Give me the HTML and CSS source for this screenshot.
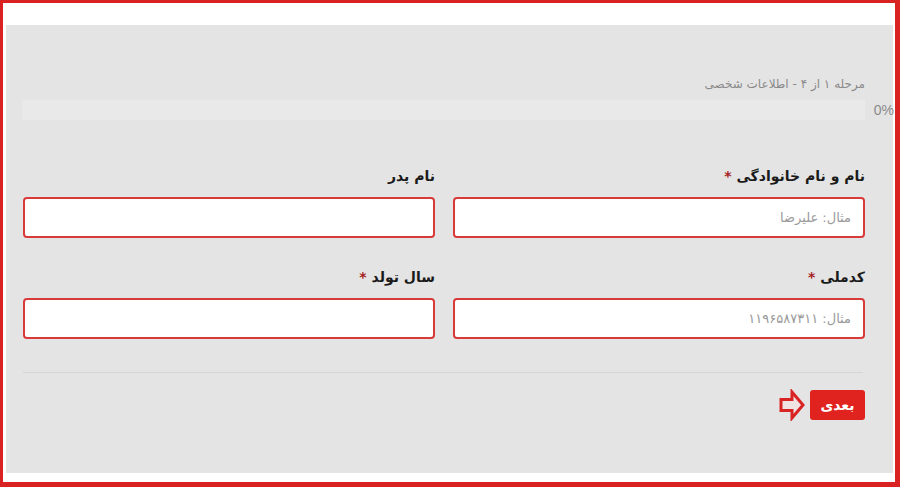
FILE: index.html
```html
<!DOCTYPE html>
<html lang="fa" dir="rtl">
<head>
<meta charset="utf-8">
<link rel="stylesheet" href="styles.css">
</head>
<body>
<div class="frame">
  <div class="panel">
    <div class="step">مرحله ۱ از ۴ - اطلاعات شخصی</div>
    <div class="progress">
      <div class="bar"></div>
      <span class="pct" dir="ltr">0%</span>
    </div>
    <div class="grid">
      <div class="field">
        <label>نام و نام خانوادگی <span class="req">*</span></label>
        <input type="text" placeholder="مثال: علیرضا">
      </div>
      <div class="field">
        <label>نام پدر</label>
        <input type="text">
      </div>
      <div class="field">
        <label>کدملی <span class="req">*</span></label>
        <input type="text" placeholder="مثال: ۱۱۹۶۵۸۷۳۱۱">
      </div>
      <div class="field">
        <label>سال تولد <span class="req">*</span></label>
        <input type="text">
      </div>
    </div>
    <div class="divider"></div>
    <div class="actions">
      <button class="next">بعدی</button>
      <svg class="arrow" width="26" height="32" viewBox="0 0 26 32">
        <path d="M2 10.5 H13 V3 L24 16 L13 29 V21.5 H2 Z" fill="#efe3e3" stroke="#d92424" stroke-width="3" stroke-linejoin="miter"/>
      </svg>
    </div>
  </div>
</div>
</body>
</html>
```

FILE: styles.css
```css
* { box-sizing: border-box; }
html, body { margin: 0; padding: 0; background: #fff; }
body { font-family: "DejaVu Sans", "Noto Sans", sans-serif; }

.frame {
  width: 900px;
  height: 487px;
  border-style: solid;
  border-color: #d92323;
  border-width: 3px 5px 5px 3px;
  padding: 22px 2px 9px 3px;
  background: #fff;
}

.panel {
  height: 100%;
  background: #e4e4e4;
  padding: 49px 28px 0 17px;
}

.step {
  font-size: 12px;
  line-height: 20px;
  color: #8a8a8a;
}

.progress {
  position: relative;
  margin-top: 6px;
  margin-left: -1px;
  height: 20px;
}
.bar {
  height: 20px;
  background: #e9e9e9;
}
.pct {
  position: absolute;
  right: -29px;
  top: 1px;
  font-family: "Liberation Sans", sans-serif;
  font-size: 14px;
  line-height: 18px;
  color: #8a8a8a;
}

.grid {
  display: grid;
  grid-template-columns: 1fr 1fr;
  column-gap: 18px;
  row-gap: 29px;
  margin-top: 46px;
}
.field label {
  display: block;
  font-weight: bold;
  font-size: 14px;
  line-height: 20px;
  color: #1a1a1a;
  margin-bottom: 11px;
}
.req { color: #a51d1d; }
.field input {
  display: block;
  width: 100%;
  height: 41px;
  border: 2px solid #d83a3a;
  border-radius: 4px;
  background: #fff;
  padding: 0 12px;
  font-family: "DejaVu Sans", sans-serif;
  font-size: 13px;
  color: #333;
  outline: none;
}
.field input::placeholder { color: #9a9a9a; }

.divider {
  height: 1px;
  background: #d6d6d6;
  margin: 33px 2px 0 0;
}

.actions {
  display: flex;
  align-items: center;
  gap: 5px;
  margin-top: 16px;
}
.next {
  width: 55px;
  height: 30px;
  border: none;
  border-radius: 3px;
  background: #e0231f;
  color: #fff;
  font-family: "DejaVu Sans", sans-serif;
  font-weight: bold;
  font-size: 14px;
  padding: 0;
}
.arrow { display: block; }
```
